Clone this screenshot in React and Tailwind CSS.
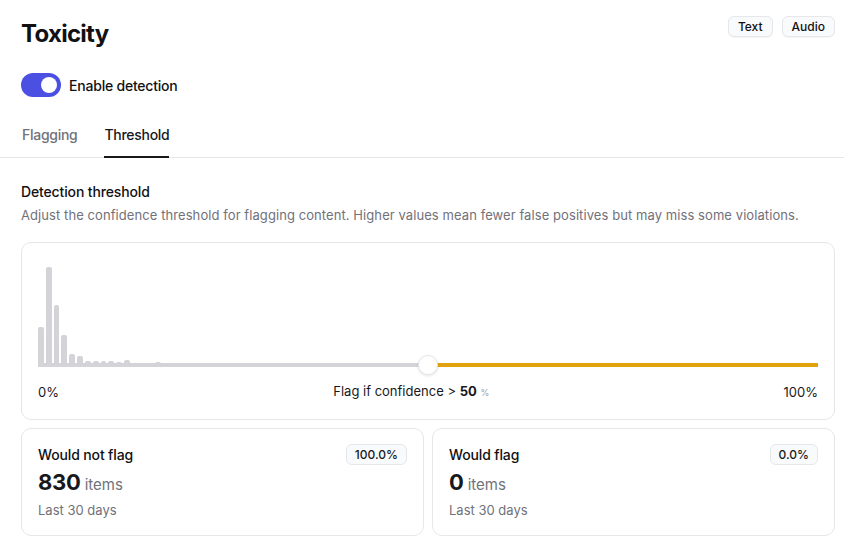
import React from "react";

// 히스토그램 막대 높이 (100개 구간)
const BINS = (() => {
  const h = new Array(100).fill(0);
  const known = [38, 98, 60, 30, 11, 9, 4, 4, 4, 4, 3, 5, 0, 0, 0, 3];
  known.forEach((v, i) => (h[i] = v));
  return h;
})();

const FONT = { fontFamily: "Inter, 'Noto Sans', sans-serif" };

// 상단 헤더
const Header = () => (
  <div className="flex items-start justify-between pt-4">
    <h1 className="mt-[2px] text-2xl leading-8 font-bold tracking-[-0.03em] text-[#111113]">Toxicity</h1>
    <div className="flex gap-[9px]">
      <ModeButton label="Text" />
      <ModeButton label="Audio" />
    </div>
  </div>
);

const ModeButton = ({ label }) => (
  <button className="h-[21px] rounded-md border border-gray-200 bg-gray-50 px-[9px] text-[12px] leading-none font-medium text-[#111113] shadow-[0_1px_1px_rgba(0,0,0,0.04)]">
    {label}
  </button>
);

// 활성화 토글
const Toggle = () => (
  <div className="mt-[23px] flex items-center gap-2">
    <div className="flex h-6 w-10 items-center justify-end rounded-full bg-[#4b50e2] px-[4px]">
      <div className="h-4 w-4 rounded-full bg-white" />
    </div>
    <span className="text-[14px] font-medium tracking-[-0.015em] text-[#111113]">Enable detection</span>
  </div>
);

// 탭
const Tabs = () => (
  <div className="mt-[28px] flex gap-[27px] border-b border-gray-200 pl-[22px]">
    <div className="-mb-px border-b-2 border-transparent pb-[11px] text-[14px] leading-5 font-medium tracking-[-0.02em] text-[#71717a]">Flagging</div>
    <div className="-mb-px border-b-2 border-[#18181b] pb-[11px] text-[14px] leading-5 font-medium tracking-[-0.02em] text-[#18181b]">Threshold</div>
  </div>
);

// 히스토그램 + 슬라이더 카드
const ThresholdChart = () => (
  <div className="mt-[18px] rounded-[10px] border border-gray-200 px-4 pt-[22px] pb-[17px]">
    <div className="flex h-[100px] items-end gap-[2px]">
      {BINS.map((v, i) => (
        <div key={i} className="flex-1 rounded-t-[2px] bg-[#d4d4d8]" style={{ height: v }} />
      ))}
    </div>
    <div className="relative -mt-[10px] flex h-5 items-center">
      <div className="h-[4px] flex-1 bg-[#d4d4d8]" />
      <div className="h-[4px] flex-1 bg-[#e1a20e]" />
      <div className="absolute top-0 left-1/2 h-5 w-5 -translate-x-1/2 rounded-full border border-gray-200 bg-white shadow-[0_1px_3px_rgba(0,0,0,0.12)]" />
    </div>
    <div className="mt-[7px] flex items-center justify-between text-[13px] leading-[18px] text-[#18181b]">
      <span>0%</span>
      <span className="mr-[20px]">
        Flag if confidence &gt; <b className="font-bold">50</b>{" "}
        <span className="text-[9px] text-gray-400">%</span>
      </span>
      <span>100%</span>
    </div>
  </div>
);

// 통계 카드
const StatCard = ({ title, count, pct }) => (
  <div className="flex-1 rounded-[10px] border border-gray-200 p-4">
    <div className="flex items-start justify-between">
      <div className="text-[14px] leading-5 font-medium tracking-[-0.01em] text-[#111113]">{title}</div>
      <div className="-mt-px flex h-[21px] items-center rounded-md border border-gray-200 bg-gray-50 px-[8px] text-[12px] font-medium text-[#18181b]">
        {pct}
      </div>
    </div>
    <div className="mt-[3px] flex h-7 items-baseline gap-[4px] overflow-hidden leading-7">
      <span className="text-[22px] font-bold tracking-[-0.01em] text-[#18181b]">{count}</span>
      <span className="text-[15px] text-[#71717a]">items</span>
    </div>
    <div className="mt-[5px] text-[13px] leading-[18px] text-[#71717a]">Last 30 days</div>
  </div>
);

const App = () => {
  return (
    <div className="min-h-screen bg-white" style={FONT}>
      <div className="pr-[9px] pl-[21px]">
        <Header />
        <Toggle />
      </div>
      <Tabs />
      <div className="pt-[24px] pr-[9px] pl-[21px]">
        <h2 className="text-[14px] leading-5 font-medium tracking-[-0.01em] text-[#111113]">Detection threshold</h2>
        <p className="mt-[4px] text-[13px] leading-[18px] tracking-[0.006em] text-[#71717a]">
          Adjust the confidence threshold for flagging content. Higher values mean fewer false positives but may miss some violations.
        </p>
        <ThresholdChart />
        <div className="mt-[8px] flex gap-[8px]">
          <StatCard title="Would not flag" count="830" pct="100.0%" />
          <StatCard title="Would flag" count="0" pct="0.0%" />
        </div>
      </div>
    </div>
  );
};

export default App;
